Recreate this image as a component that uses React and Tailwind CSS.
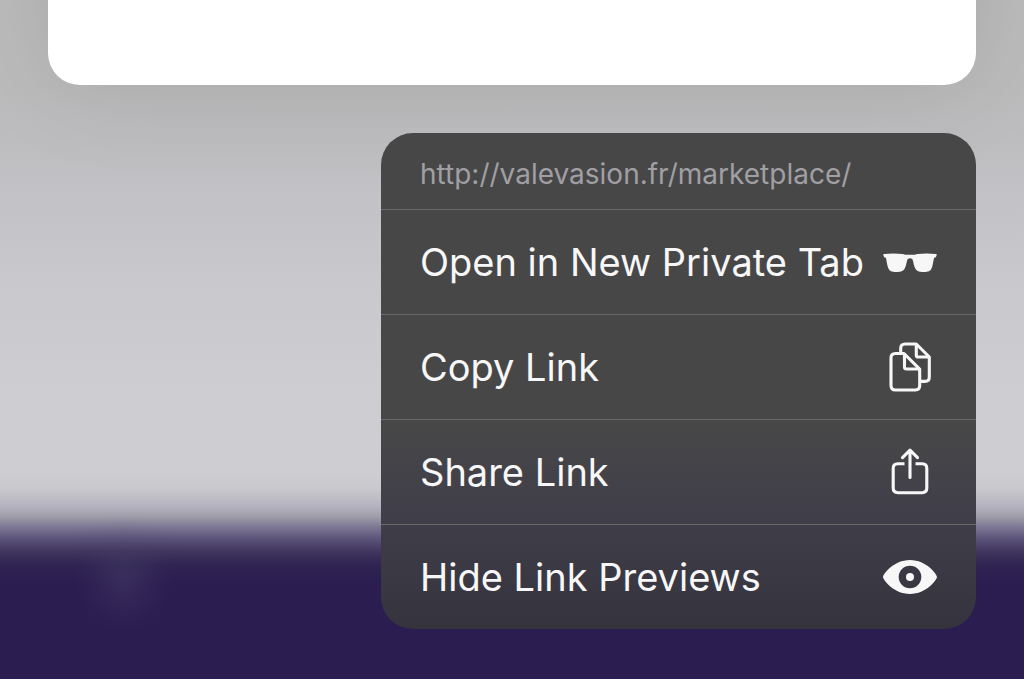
const SunglassesIcon = () => (
  <svg viewBox="0 -2 54 50" className="h-[50px] w-[54px]" fill="currentColor" aria-hidden="true">
    <path d="M0.4 16.2C-0.1 15.4 0.3 14.9 1.2 14.9C7 14.2 14 14.2 19.5 14.9C21.5 15 21.5 15.7 23.5 15.7H30.5C32.5 15.7 32.5 15 34.5 14.9C40 14.2 47 14.2 52.8 14.9C53.7 14.9 54.1 15.4 53.6 16.2L53 18C52.7 18.6 51.4 18.5 51 19.3C50.2 22 50.2 25.5 48.8 29C47.6 32 45.3 33 40.8 33C35.500 33 33 32 31.600 28C30.7 25.5 30.5 23.5 30 21.7C29.5 19.9 28.5 19.2 27 19.2C25.5 19.2 24.5 19.9 24 21.7C23.5 23.5 23.3 25.5 22.4 28C21 32 18.5 33 13.2 33C8.7 33 6.4 32 5.2 29C3.8 25.5 3.8 22 3 19.3C2.6 18.5 1.3 18.6 1 18Z" />
  </svg>
);

const CopyIcon = () => (
  <svg
    viewBox="0 0 54 50"
    className="h-[50px] w-[54px]"
    fill="none"
    stroke="currentColor"
    strokeWidth="3.1"
    strokeLinejoin="round"
    aria-hidden="true"
  >
    <path d="M17.7 10.5V6.4C17.7 3.4 19.1 2 22.1 2H33.3L46.3 15V35C46.3 38 44.9 39.4 41.9 39.4H37.5" />
    <path d="M33.3 2V13.2C33.3 14.4 33.9 15 35.1 15H46.3" />
    <path d="M12.4 11.5H21L36.7 27.2V43.6C36.7 46.6 35.3 48 32.3 48H12.4C9.4 48 8 46.6 8 43.6V15.9C8 12.9 9.4 11.5 12.4 11.5Z" />
    <path d="M21.5 12V25C21.5 26.4 22.1 27 23.5 27H36.3" />
  </svg>
);

const ShareIcon = () => (
  <svg
    viewBox="0 0 54 50"
    className="h-[50px] w-[54px]"
    fill="none"
    stroke="currentColor"
    strokeWidth="3.1"
    strokeLinecap="round"
    strokeLinejoin="round"
    aria-hidden="true"
  >
    <path
      strokeLinecap="butt"
      d="M21.5 16.7H14.8C11.7 16.7 10.2 18.2 10.2 21.3V41.1C10.2 44.2 11.7 45.7 14.8 45.7H39.2C42.3 45.7 43.8 44.2 43.8 41.1V21.3C43.8 18.2 42.3 16.7 39.2 16.7H32.5"
    />
    <path d="M27 30.5V4M19.5 10.6L27 3.2L34.5 10.6" />
  </svg>
);

const EyeIcon = () => (
  <svg viewBox="0 0 54 50" className="h-[50px] w-[54px]" fill="currentColor" aria-hidden="true">
    <path
      fillRule="evenodd"
      d="M0 25C0 22.5 10.5 8 27 8C43.5 8 54 22.5 54 25C54 27.5 43.5 42 27 42C10.5 42 0 27.5 0 25ZM27 13.7A11.3 11.3 0 1 0 27 36.3A11.3 11.3 0 1 0 27 13.7ZM27 21A4 4 0 1 1 27 29A4 4 0 1 1 27 21Z"
    />
  </svg>
);

const ACTIONS = [
  { name: "Open in New Private Tab", icon: <SunglassesIcon /> },
  { name: "Copy Link", icon: <CopyIcon /> },
  { name: "Share Link", icon: <ShareIcon /> },
  { name: "Hide Link Previews", icon: <EyeIcon /> },
];

const LinkMenu = () => (
  <div className="w-[595px] overflow-hidden rounded-[32px] bg-linear-to-b from-[#474748] from-60% via-[#413f49] via-75% to-[#35333d]">
    <p className="flex h-[76px] items-center px-[39px] pt-1.5 text-[28px] text-[#a09fa4]">
      http://valevasion.fr/marketplace/
    </p>
    {ACTIONS.map((action) => (
      <button
        key={action.name}
        type="button"
        className="flex h-[105px] w-full items-center justify-between border-t border-[#68686b] px-[39px] text-[38px] whitespace-nowrap text-[#f7f7f8]"
      >
        {action.name}
        {action.icon}
      </button>
    ))}
  </div>
);

export default function App() {
  return (
    <main className="relative isolate min-h-screen overflow-hidden bg-[linear-gradient(#bbbbbc_85px,#bdbdbf_140px,#c3c2c7_200px,#cac9ce_300px,#cecdd2_400px,#cecdd2_475px,#c8c7cb_490px,#b5b3c0_506px,#a09fab_516px,#7d7894_527px,#5c5379_539px,#40365f_551px,#2f2452_565px,#2b1d50_585px)] px-12 font-[Inter,'Liberation_Sans',sans-serif]">
      {/* blurred page content showing through the backdrop */}
      <div className="absolute top-[545px] left-[100px] -z-10 h-16 w-12 rounded-full bg-[#48406a] opacity-50 blur-lg" />

      <div className="-mt-96 h-[469px] rounded-[32px] bg-white shadow-[0_0_100px_rgba(0,0,0,0.1)]" />

      <div className="relative mt-12 flex justify-end">
        <LinkMenu />
      </div>
    </main>
  );
}
